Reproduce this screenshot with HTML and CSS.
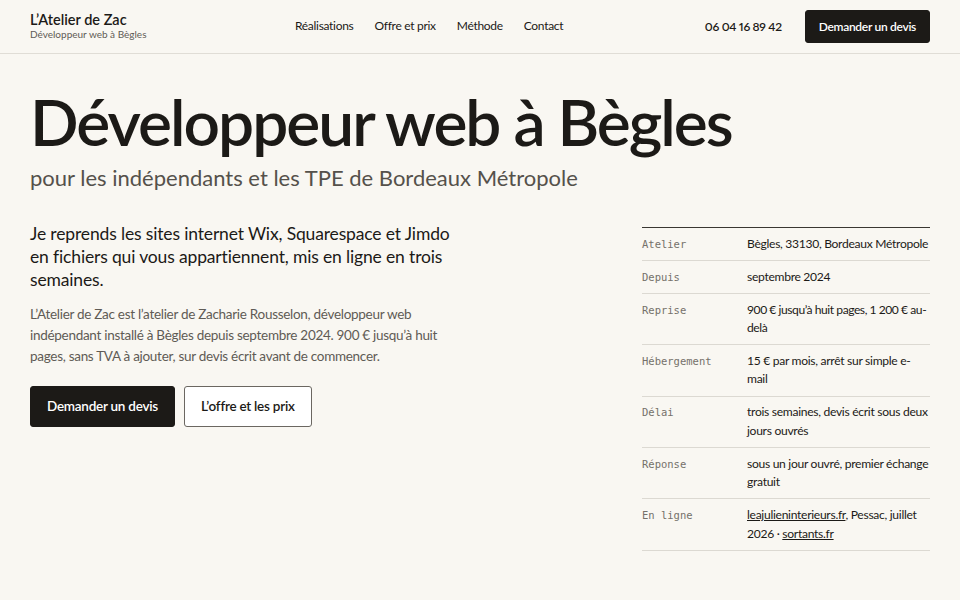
FILE: index.html
```html
<!DOCTYPE html>
<html lang="fr">
<head>
    <meta charset="UTF-8">
    <meta name="viewport" content="width=device-width, initial-scale=1.0">
    <title>L’Atelier de Zac — Développeur web à Bègles</title>
    <link rel="stylesheet" href="styles.css">
</head>
<body>
    <header class="site-header">
        <a class="brand" href="#">
            <span class="brand-name">L’Atelier de Zac</span>
            <span class="brand-tagline">Développeur web à Bègles</span>
        </a>
        <nav class="main-nav">
            <a href="#realisations">Réalisations</a>
            <a href="#offre">Offre et prix</a>
            <a href="#methode">Méthode</a>
            <a href="#contact">Contact</a>
        </nav>
        <div class="header-end">
            <a class="phone" href="tel:0604168942">06 04 16 89 42</a>
            <a class="btn btn-dark btn-small" href="#devis">Demander un devis</a>
        </div>
    </header>

    <main class="hero">
        <h1>Développeur web à Bègles</h1>
        <p class="hero-sub">pour les indépendants et les TPE de Bordeaux Métropole</p>

        <div class="hero-body">
            <div class="hero-text">
                <p class="lead">Je reprends les sites internet Wix, Squarespace et Jimdo en fichiers qui vous appartiennent, mis en ligne en trois semaines.</p>
                <p class="intro">L’Atelier de Zac est l’atelier de Zacharie Rousselon, développeur web indépendant installé à Bègles depuis septembre 2024. 900&nbsp;€ jusqu’à huit pages, sans TVA à ajouter, sur devis écrit avant de commencer.</p>
                <div class="actions">
                    <a class="btn btn-dark" href="#devis">Demander un devis</a>
                    <a class="btn btn-light" href="#offre">L’offre et les prix</a>
                </div>
            </div>

            <dl class="facts">
                <div class="fact">
                    <dt>Atelier</dt>
                    <dd>Bègles, 33130, Bordeaux Métropole</dd>
                </div>
                <div class="fact">
                    <dt>Depuis</dt>
                    <dd>septembre 2024</dd>
                </div>
                <div class="fact">
                    <dt>Reprise</dt>
                    <dd class="tight">900&nbsp;€ jusqu’à huit pages, 1&#8239;200&nbsp;€ au-delà</dd>
                </div>
                <div class="fact">
                    <dt>Hébergement</dt>
                    <dd>15&nbsp;€ par mois, arrêt sur simple e-mail</dd>
                </div>
                <div class="fact">
                    <dt>Délai</dt>
                    <dd>trois semaines, devis écrit sous deux jours ouvrés</dd>
                </div>
                <div class="fact">
                    <dt>Réponse</dt>
                    <dd>sous un jour ouvré, premier échange gratuit</dd>
                </div>
                <div class="fact">
                    <dt>En ligne</dt>
                    <dd><a href="#">leajulieninterieurs.fr</a>, Pessac, juillet 2026 · <a href="#">sortants.fr</a></dd>
                </div>
            </dl>
        </div>
    </main>
</body>
</html>
```

FILE: styles.css
```css
body {
    margin: 0;
    background-color: #f9f7f2;
    color: #1c1a17;
    font-family: Lato, 'Noto Sans', sans-serif;
    line-height: 1.5;
}
a {
    color: inherit;
    text-decoration: none;
}

/* header */
.site-header {
    display: flex;
    align-items: center;
    height: 53px;
    padding: 0 30px;
    border-bottom: 1px solid #e0ddd6;
}
.brand {
    display: flex;
    flex-direction: column;
    width: 265px;
    margin-top: -1px;
}
.brand-name {
    font-size: 14.5px;
    font-weight: 600;
    line-height: 17px;
}
.brand-tagline {
    font-size: 10px;
    color: #5f5b55;
    line-height: 13px;
}
.main-nav {
    display: flex;
    gap: 21px;
    font-size: 12px;
    letter-spacing: -0.3px;
    margin-top: -1px;
}
.header-end {
    display: flex;
    align-items: center;
    gap: 23px;
    margin-left: auto;
}
.phone {
    font-size: 12px;
    font-weight: 600;
    letter-spacing: -0.3px;
    font-variant-numeric: proportional-nums;
}

/* buttons */
.btn {
    display: inline-block;
    border-radius: 3px;
    font-size: 13.5px;
    font-weight: 600;
    letter-spacing: -0.25px;
    padding: 10px 16px;
    line-height: 19px;
}
.btn-dark {
    background-color: #1c1a17;
    color: #fff;
    border: 1px solid #1c1a17;
}
.btn-light {
    background-color: #fff;
    border: 1px solid #6b6761;
}
.btn-small {
    font-size: 12px;
    letter-spacing: -0.3px;
    padding: 6px 13px;
}

/* hero */
.hero {
    padding: 0 30px;
}
h1 {
    margin: 30px 0 0;
    font-size: 64px;
    font-weight: 600;
    line-height: 1.2;
    letter-spacing: -2px;
}
.hero-sub {
    margin: 3px 0 0;
    font-size: 22px;
    color: #55514b;
    line-height: 28px;
}
.hero-body {
    display: flex;
    justify-content: space-between;
    margin-top: 30px;
}
.hero-text {
    width: 430px;
}
.lead {
    margin: 0;
    font-size: 17.5px;
    line-height: 23px;
    letter-spacing: -0.15px;
}
.intro {
    margin: 13px 0 0;
    width: 425px;
    font-size: 13.5px;
    line-height: 21px;
    letter-spacing: -0.29px;
    color: #5f5b55;
}
.actions {
    display: flex;
    gap: 9px;
    margin-top: 19px;
}

/* facts table */
.facts {
    width: 288px;
    margin: 5px 0 0;
    border-top: 1px solid #3a3732;
}
.fact {
    display: flex;
    padding: 6.8px 0;
    border-bottom: 1px solid #dcd9d2;
}
.fact dt {
    width: 105px;
    flex-shrink: 0;
    font-family: 'DejaVu Sans Mono', monospace;
    font-size: 10.5px;
    color: #75716a;
    line-height: 18.4px;
}
.fact dd {
    margin: 0;
    font-size: 12.1px;
    letter-spacing: -0.3px;
    line-height: 18.4px;
}
.fact dd.tight {
    letter-spacing: -0.45px;
}
.fact dd a {
    text-decoration: underline;
    text-decoration-thickness: 1px;
    text-underline-offset: 1px;
}
```
